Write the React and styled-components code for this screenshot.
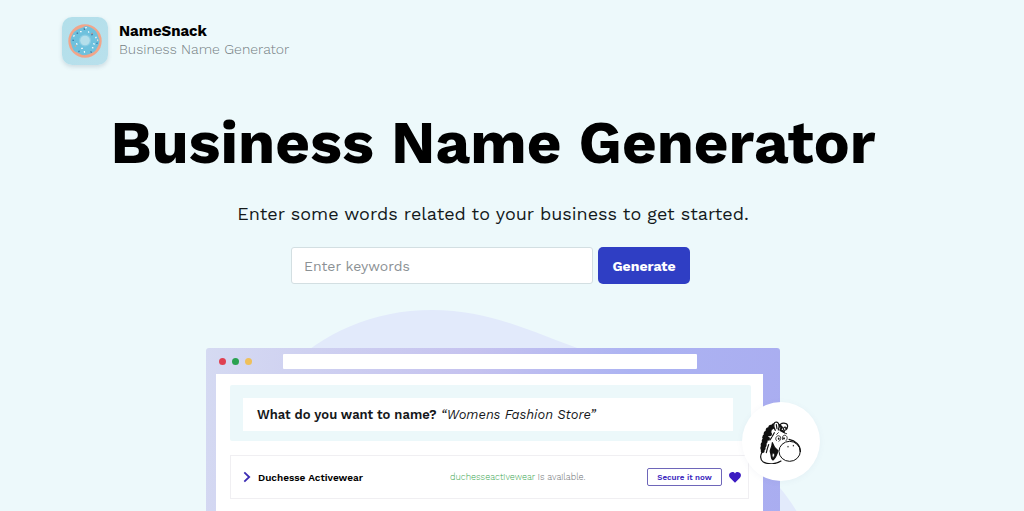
import React from "react";
import styled, { createGlobalStyle } from "styled-components";

const GlobalStyle = createGlobalStyle`
  *, *::before, *::after { box-sizing: border-box; }
  body {
    margin: 0;
    background: #edf9fb;
    color: #000;
    font-family: "Work Sans", Inter, "Liberation Sans", sans-serif;
  }
  button, input { font-family: inherit; }
`;

const Page = styled.div`
  display: flex;
  flex-direction: column;
  height: 100vh;
  overflow: hidden;
`;

const Header = styled.header`
  padding: 17px 62px 0;
`;

const Brand = styled.a`
  display: inline-flex;
  align-items: flex-start;
  gap: 11px;
  color: inherit;
  text-decoration: none;
`;

const BrandIcon = styled.span`
  display: flex;
  align-items: center;
  justify-content: center;
  width: 46px;
  height: 48px;
  border-radius: 10px;
  background: linear-gradient(135deg, #b2dfea, #b9e0ec);
  box-shadow: 0 2px 4px rgba(60, 90, 110, 0.18);
`;

const BrandText = styled.span`
  display: flex;
  flex-direction: column;
  padding-top: 4px;
`;

const BrandName = styled.strong`
  font-size: 15px;
  line-height: 20px;
  font-weight: 700;
`;

const BrandTagline = styled.span`
  font-size: 14px;
  line-height: 17px;
  font-weight: 350;
  color: #747e82;
`;

const Hero = styled.main`
  display: flex;
  flex: 1;
  flex-direction: column;
  min-height: 0;
  padding-right: 38px;
`;

const Title = styled.h1`
  margin: 42px 0 0;
  font-size: 60px;
  line-height: 72px;
  font-weight: 700;
  text-align: center;
`;

const Lead = styled.p`
  margin: 22px 0 0;
  font-size: 18px;
  line-height: 26px;
  color: #14191b;
  text-align: center;
`;

const SearchForm = styled.form`
  display: flex;
  justify-content: center;
  gap: 5px;
  margin-top: 20px;
  padding-right: 5px;
`;

const KeywordInput = styled.input`
  flex: 0 1 302px;
  min-width: 0;
  height: 37px;
  padding: 0 12px;
  border: 1px solid #d3dfe2;
  border-radius: 3px;
  background: #fff;
  font-size: 14px;
  &::placeholder { color: #8b9194; opacity: 1; }
`;

const GenerateButton = styled.button`
  min-width: 92px;
  height: 37px;
  padding: 0 14px;
  border: 0;
  border-radius: 5px;
  background: #2f3ec4;
  color: #fff;
  font-size: 14px;
  font-weight: 700;
`;

const Stage = styled.section`
  flex: 1;
  min-height: 0;
  overflow: hidden;
  padding-top: 64px;
  margin-right: -38px;
  padding-right: 38px;
`;

const Preview = styled.div`
  position: relative;
  width: 100%;
  max-width: 574px;
  margin: 0 auto;
`;

const Blob = styled.svg`
  position: absolute;
  top: -38px;
  left: 0;
  overflow: visible;
`;

const BrowserFrame = styled.div`
  position: relative;
  min-height: 320px;
  padding: 0 17px 16px 10px;
  border-radius: 3px;
  background: linear-gradient(100deg, #d5daf2 0%, #c5c2ef 43%, #acb3f2 68%, #a9acf0 100%);
`;

const BrowserBar = styled.div`
  display: flex;
  align-items: center;
  height: 26px;
  padding: 0 66px 0 3px;
`;

const Dots = styled.div`
  display: flex;
  gap: 6px;
  flex: none;
  width: 64px;
`;

const Dot = styled.span`
  width: 7px;
  height: 7px;
  border-radius: 50%;
  background: ${(p) => p.$color};
`;

const AddressBar = styled.div`
  flex: 1;
  height: 15px;
  border-radius: 1px;
  background: #fff;
`;

const BrowserBody = styled.div`
  min-height: 280px;
  padding: 11px 12px 20px 14px;
  background: #fff;
`;

const QuestionPanel = styled.div`
  padding: 13px 18px 10px 13px;
  border-radius: 2px;
  background: #ecf8fa;
`;

const Question = styled.p`
  margin: 0;
  padding: 0 14px;
  background: #fff;
  font-size: 13px;
  line-height: 33px;
  color: #15171a;
`;

const QuestionLabel = styled.strong`
  font-weight: 600;
`;

const ResultRow = styled.div`
  display: grid;
  grid-template-columns: 23px 192px 1fr auto 26px;
  align-items: center;
  height: 44px;
  margin: 14px 2px 0 0;
  padding-left: 4px;
  border: 1px solid #f0eff2;
`;

const ResultName = styled.span`
  font-size: 10px;
  font-weight: 600;
`;

const Availability = styled.span`
  font-size: 9px;
  font-weight: 350;
  color: #6c7074;
`;

const Domain = styled.span`
  color: #3aa650;
`;

const SecureButton = styled.button`
  width: 75px;
  height: 18px;
  padding: 0;
  border: 1px solid #6e66b9;
  border-radius: 2px;
  background: #fff;
  color: #3a1fbd;
  font-size: 8px;
  font-weight: 600;
`;

const IconButton = styled.button`
  display: flex;
  justify-content: center;
  padding: 0;
  border: 0;
  background: none;
`;

const MascotBadge = styled.div`
  position: absolute;
  top: 54px;
  right: -40px;
  display: flex;
  align-items: center;
  justify-content: center;
  width: 78px;
  height: 79px;
  border-radius: 50%;
  background: #fff;
  box-shadow: 0 1px 6px rgba(80, 110, 150, 0.06);
`;

const SPRINKLES = [
  ["#fff", 13, 8], ["#456b92", 17, 5], ["#e9f7ff", 22, 8], ["#d18a82", 26, 10],
  ["#fff", 8, 13], ["#397fae", 7, 18], ["#fff", 10, 22], ["#dba58d", 8, 24],
  ["#fff", 28, 15], ["#397fae", 29, 20], ["#fff", 25, 24], ["#42719b", 24, 28],
  ["#fff", 18, 28], ["#397fae", 13, 28], ["#fff", 20, 5], ["#42719b", 11, 11],
  ["#fff", 27, 22], ["#f1d7d0", 30, 18], ["#42719b", 24, 12], ["#fff", 14, 25],
];

function Donut() {
  return (
    <svg width="36" height="36" viewBox="0 0 36 36" aria-hidden="true">
      <circle cx="18" cy="18" r="16.7" fill="#f1a58a" />
      <path d="M18 3.2C21.8 2.6 25 5.3 28.2 7.4C30.3 9.5 31 13 32.3 16.3C33.2 20 30.8 23.4 29 26.9C26.5 30.1 22.7 30.8 19 32.1C15.2 32.9 11.9 30.2 8.4 28.7C5.3 26.6 5 22.8 3.6 19.4C2.8 15.7 4.9 12.1 7 8.9C9.9 6 14 5.4 18 3.2Z" fill="#6fc1dd" />
      <circle cx="18" cy="17.5" r="6.1" fill="#8acce3" />
      <circle cx="18" cy="17.5" r="4.8" fill="#b5dfeb" />
      {SPRINKLES.map(([color, x, y], i) => (
        <rect key={i} x={x} y={y} width="1.7" height="1.3" rx=".5" fill={color} transform={`rotate(${i * 37} ${x} ${y})`} />
      ))}
    </svg>
  );
}

const MANE = [
  [45, 18, 8], [36, 22, 8], [29, 31, 9], [23, 41, 9], [19, 52, 9],
  [17, 63, 9], [14, 74, 9], [12, 84, 8], [11, 93, 6], [32, 42, 7], [27, 56, 6],
];

function Donkey() {
  return (
    <svg width="44" height="44" viewBox="0 0 132 132" fill="none" stroke="#101010" strokeWidth="3.5" strokeLinecap="round" strokeLinejoin="round" role="img" aria-label="Smiling donkey">
      <path d="M10 95C3 107 4 119 13 126C27 134 52 133 66 123" />
      {MANE.map(([x, y, r], i) => (
        <circle key={i} cx={x} cy={y} r={r} fill="#101010" stroke="none" />
      ))}
      <path d="M49 31C41 19 44 6 52 6C61 7 62 20 58 30" fill="#fff" />
      <path d="M52 14L54 26" />
      <path d="M64 24C58 15 67 7 79 10C89 12 87 25 80 30C73 33 70 26 76 22C80 20 83 23 80 26" />
      <path d="M62 15L69 22L64 30L75 36" strokeWidth="6" />
      <path d="M46 38L40 49M38 52L33 60M22 98L25 86L29 74" />
      <path d="M40 68C43 79 50 87 57 92C54 103 50 114 42 120C35 117 38 105 34 96C31 92 39 84 40 68Z" fill="#101010" />
      <path d="M42 99C48 101 48 108 42 113C39 109 38 103 42 99Z" fill="#fff" strokeWidth="2" />
      <path d="M53 62C46 58 52 44 62 48C67 51 66 60 60 64M71 59C68 52 72 44 79 46C85 48 87 57 81 62M53 43L58 38M76 39L83 41" strokeWidth="2.5" />
      <ellipse cx="59" cy="56" rx="2.5" ry="3.5" fill="#101010" stroke="none" />
      <ellipse cx="75" cy="55" rx="2.5" ry="3.5" fill="#101010" stroke="none" />
      <ellipse cx="92" cy="94" rx="32" ry="30" fill="#fff" strokeWidth="3" />
      <path d="M90 58C109 62 124 75 124 94" />
      <path d="M87 79L87 81M103 76L103 78" strokeWidth="3" />
    </svg>
  );
}

export default function App() {
  return (
    <Page>
      <GlobalStyle />
      <Header>
        <Brand href="#">
          <BrandIcon><Donut /></BrandIcon>
          <BrandText>
            <BrandName>NameSnack</BrandName>
            <BrandTagline>Business Name Generator</BrandTagline>
          </BrandText>
        </Brand>
      </Header>
      <Hero>
        <Title>Business Name Generator</Title>
        <Lead>Enter some words related to your business to get started.</Lead>
        <SearchForm onSubmit={(e) => e.preventDefault()}>
          <KeywordInput type="text" aria-label="Keywords" placeholder="Enter keywords" />
          <GenerateButton type="submit">Generate</GenerateButton>
        </SearchForm>
        <Stage>
          <Preview>
            <Blob width="574" height="300" viewBox="0 0 574 300" aria-hidden="true">
              <path d="M80 60C116 23 167 0 226 0C286 0 330 24 374 39C440 58 520 116 574 178C599 208 612 240 620 300L80 300Z" fill="#e2eafb" />
            </Blob>
            <BrowserFrame>
              <BrowserBar>
                <Dots>
                  <Dot $color="#df4051" />
                  <Dot $color="#2aa251" />
                  <Dot $color="#efc05b" />
                </Dots>
                <AddressBar />
              </BrowserBar>
              <BrowserBody>
                <QuestionPanel>
                  <Question>
                    <QuestionLabel>What do you want to name?</QuestionLabel> <em>“Womens Fashion Store”</em>
                  </Question>
                </QuestionPanel>
                <ResultRow>
                  <IconButton type="button" aria-label="Show details">
                    <svg width="8" height="12" viewBox="0 0 8 12" fill="none" stroke="#3b2bb3" strokeWidth="1.8" aria-hidden="true">
                      <path d="M1.3 1.3L6.2 6L1.3 10.7" />
                    </svg>
                  </IconButton>
                  <ResultName>Duchesse Activewear</ResultName>
                  <Availability><Domain>duchesseactivewear</Domain> is available.</Availability>
                  <SecureButton type="button">Secure it now</SecureButton>
                  <IconButton type="button" aria-label="Save name">
                    <svg width="12" height="11" viewBox="0 0 12 11" fill="#3c1bc2" aria-hidden="true">
                      <path d="M6 10.7L1 5.8C-.4 4.2-.2 1.8 1.4.8C3-.3 5-.1 6 1.6C7-.1 9-.3 10.6.8C12.2 1.8 12.4 4.2 11 5.8Z" />
                    </svg>
                  </IconButton>
                </ResultRow>
              </BrowserBody>
            </BrowserFrame>
            <MascotBadge><Donkey /></MascotBadge>
          </Preview>
        </Stage>
      </Hero>
    </Page>
  );
}
